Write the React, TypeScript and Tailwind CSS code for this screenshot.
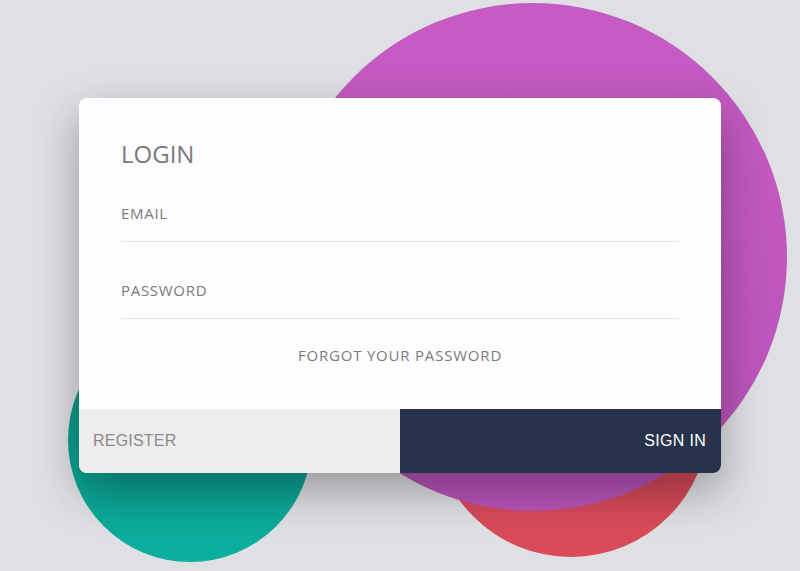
// Login card over three decorative blobs.
const sans = { fontFamily: '"Open Sans", "Noto Sans", sans-serif' };
const arial = { fontFamily: '"Liberation Sans", Arial, sans-serif' };

function Field({ label }: { label: string }) {
  return (
    <label className="flex flex-col">
      <span className="text-[15px] leading-[20px] tracking-[0.7px] text-[#7b7b7b]">{label}</span>
      <input className="h-[19px] border-b border-[#e4e4e6] bg-transparent outline-none" />
    </label>
  );
}

export default function App() {
  return (
    <div className="relative flex h-screen w-full items-center justify-center overflow-hidden bg-[#dfe0e3]" style={sans}>
      {/* blobs */}
      <div className="absolute left-[433px] top-[281px] h-[276px] w-[276px] rounded-full bg-gradient-to-b from-[#cc4654] to-[#da4b5a]" />
      <div className="absolute left-[279px] top-[3px] h-[508px] w-[508px] rounded-full bg-gradient-to-b from-[#c65cc3] to-[#b953b9]" />
      <div className="absolute left-[68px] top-[318px] h-[244px] w-[244px] rounded-full bg-gradient-to-b from-[#0a8d7d] to-[#0bb09f]" />

      <div className="relative flex h-[375px] w-[642px] flex-col overflow-hidden rounded-[8px] bg-[#fdfcfe] shadow-[0_18px_45px_rgba(0,0,0,0.32)]">
        <div className="flex flex-1 flex-col px-[42px] pt-[40px]">
          <h1 className="text-[24px] leading-[32px] text-[#7a7a7a]">LOGIN</h1>
          <div className="mt-[33px]">
            <Field label="EMAIL" />
          </div>
          <div className="mt-[38px]">
            <Field label="PASSWORD" />
          </div>
          <a className="mt-[26px] text-center text-[15px] leading-[20px] tracking-[0.8px] text-[#7b7b7b]">
            FORGOT YOUR PASSWORD
          </a>
        </div>
        <div className="flex h-[64px]" style={arial}>
          <button className="flex flex-1 items-center bg-[#eeeded] pl-[14px] text-[16px] tracking-[0.2px] text-[#8a8a8a]">
            REGISTER
          </button>
          <button className="flex flex-1 items-center justify-end bg-[#27334b] pr-[15px] text-[16px] tracking-[0.3px] text-white">
            SIGN IN
          </button>
        </div>
      </div>
    </div>
  );
}
